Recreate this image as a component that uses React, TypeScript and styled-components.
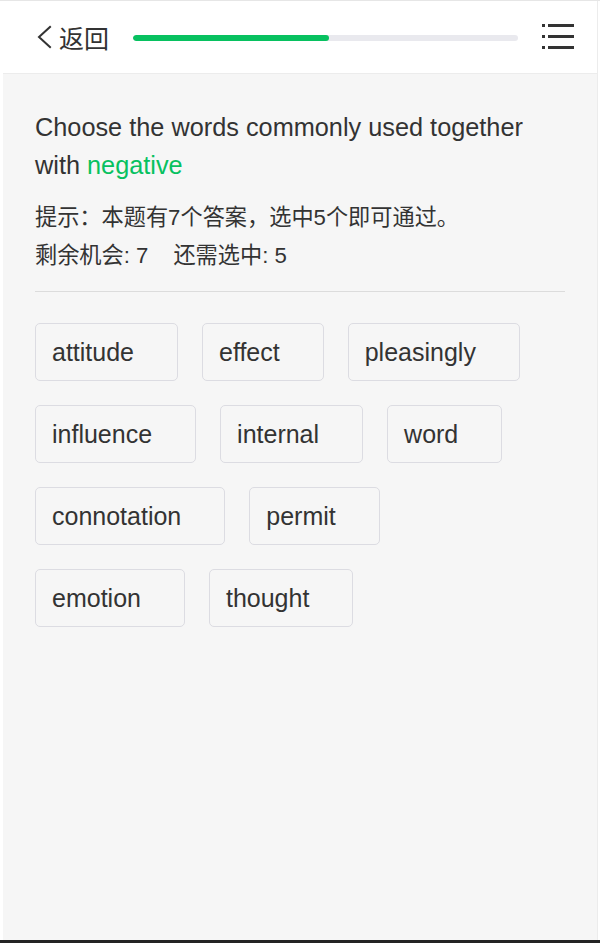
import React from "react";
import styled, { createGlobalStyle } from "styled-components";

const Global = createGlobalStyle`
  html, body { margin: 0; padding: 0; background: #ffffff; }
  body { font-family: "Liberation Sans", "Noto Sans CJK SC", sans-serif; color: #333333; }
  * { box-sizing: border-box; }
`;

const Screen = styled.div`
  width: 600px;
  height: 943px;
  display: flex;
  flex-direction: column;
  border-top: 1px solid #e6e6e6;
  background: #ffffff;
`;

const Frame = styled.div`
  flex: 1;
  margin: 0 2px 0 3px;
  border-right: 1px solid #ececec;
  display: flex;
  flex-direction: column;
  background: #f6f6f6;
`;

const TaskBar = styled.div`
  height: 3px;
  background: #232323;
`;

const Header = styled.header`
  height: 73px;
  flex: none;
  background: #ffffff;
  border-bottom: 1px solid #ececec;
  display: flex;
  align-items: center;
  padding: 0 23px 0 33px;
`;

const Back = styled.div`
  display: flex;
  align-items: center;
  gap: 7px;
  font-size: 25px;
  color: #333333;
  flex: none;
`;

const Progress = styled.div`
  flex: 1;
  height: 6px;
  border-radius: 3px;
  background: #e9e9ee;
  margin: 1px 24px 0 24px;
  overflow: hidden;
`;

const ProgressFill = styled.div`
  height: 100%;
  border-radius: 3px;
  background: #07c160;
`;

const Content = styled.main`
  flex: 1;
  padding: 34px 32px 0 32px;
`;

const Title = styled.div`
  font-size: 25.3px;
  line-height: 38px;
  color: #333333;
`;

const Highlight = styled.span`
  color: #07c160;
`;

const Hint = styled.div`
  margin-top: 15px;
  font-size: 22.2px;
  line-height: 38px;
  color: #333333;
`;

const Gap = styled.span`
  display: inline-block;
  width: 25px;
`;

const Divider = styled.hr`
  margin: 16px 0 31px;
  border: 0;
  border-top: 1px solid #dcdcdc;
`;

const Words = styled.div`
  display: flex;
  flex-wrap: wrap;
`;

const Word = styled.div`
  height: 58px;
  display: flex;
  align-items: center;
  margin: 0 24px 24px 0;
  padding: 0 43px 0 16px;
  border: 1px solid #dcdce2;
  border-radius: 5px;
  background: #f6f6f6;
  font-size: 25px;
  color: #333333;
`;

const ChevronIcon = () => (
  <svg width="16" height="24" viewBox="0 0 16 24" fill="none">
    <path d="M14 2 L3 12 L14 22" stroke="#333" strokeWidth="2" strokeLinecap="square" strokeLinejoin="miter" />
  </svg>
);

const MenuIcon = () => (
  <svg width="32" height="26" viewBox="0 0 32 26" fill="#333">
    <rect x="0" y="0" width="3" height="3" />
    <rect x="6" y="0" width="26" height="3" />
    <rect x="0" y="11" width="3" height="3" />
    <rect x="6" y="11" width="26" height="3" />
    <rect x="0" y="22" width="3" height="3" />
    <rect x="6" y="22" width="26" height="3" />
  </svg>
);

const words = [
  "attitude",
  "effect",
  "pleasingly",
  "influence",
  "internal",
  "word",
  "connotation",
  "permit",
  "emotion",
  "thought",
];

export default function App() {
  const progress = 51;
  return (
    <>
      <Global />
      <Screen>
        <Frame>
          <Header>
            <Back>
              <ChevronIcon />
              <span>返回</span>
            </Back>
            <Progress>
              <ProgressFill style={{ width: `${progress}%` }} />
            </Progress>
            <MenuIcon />
          </Header>
          <Content>
            <Title>
              Choose the words commonly used together with <Highlight>negative</Highlight>
            </Title>
            <Hint>
              <div>提示：本题有7个答案，选中5个即可通过。</div>
              <div>
                剩余机会: 7<Gap />还需选中: 5
              </div>
            </Hint>
            <Divider />
            <Words>
              {words.map((w) => (
                <Word key={w}>{w}</Word>
              ))}
            </Words>
          </Content>
        </Frame>
        <TaskBar />
      </Screen>
    </>
  );
}
